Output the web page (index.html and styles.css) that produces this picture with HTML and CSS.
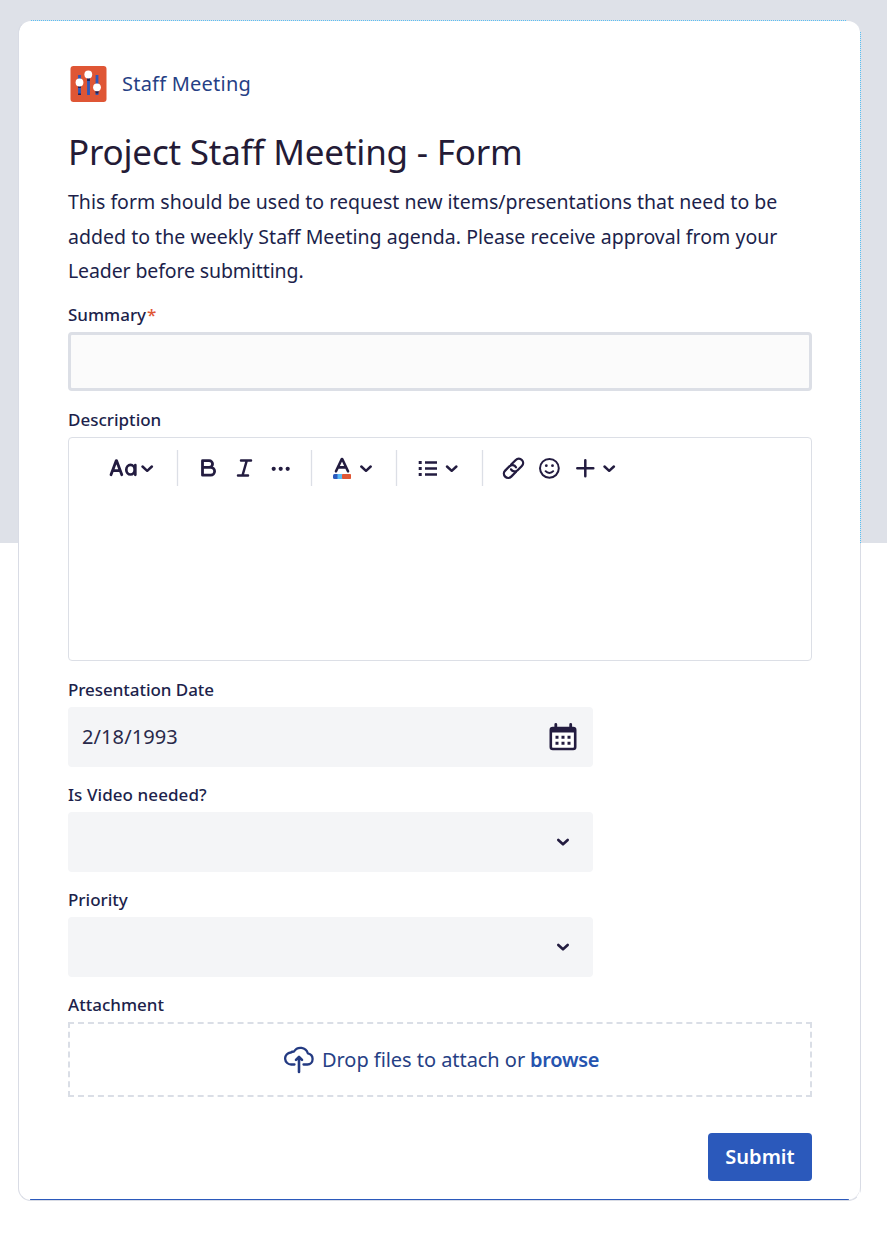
FILE: index.html
```html
<!DOCTYPE html>
<html lang="en">
<head>
<meta charset="utf-8">
<title>Project Staff Meeting - Form</title>
<link rel="stylesheet" href="styles.css">
</head>
<body>
<main class="card">
  <header class="project">
    <svg class="logo" viewBox="0 0 37 37" width="37" height="37">
      <rect x="0.5" y="0" width="36" height="36" rx="3" fill="#df5635"/>
      <path d="M9.500 9v20M18.500 7v22M27 9v20" stroke="#2b59bd" stroke-width="2.800"/>
      <path d="M9.500 20v2M9.500 27.500v1.500M18.500 12v3M27 25v2.500" stroke="#29204a" stroke-width="2.800"/>
      <g fill="#fff"><circle cx="9.500" cy="16.500" r="3.900"/><circle cx="18.300" cy="8.500" r="3.900"/><circle cx="27" cy="21.300" r="3.900"/></g>
    </svg>
    <span class="project-name">Staff Meeting</span>
  </header>
  <h1 class="title">Project Staff Meeting - Form</h1>
  <p class="intro"><span class="l1">This form should be used to request new items/presentations that need to be</span><br><span class="l2">added to the weekly Staff Meeting agenda. Please receive approval from your</span><br><span class="l3">Leader before submitting.</span></p>

  <label class="label summary-label">Summary<span class="required">*</span></label>
  <div class="input"></div>

  <label class="label description-label">Description</label>
  <div class="editor">
    <div class="toolbar">
      <svg width="560" height="38" viewBox="108 449 560 38" fill="none" stroke="#231c40" stroke-width="2.500" stroke-linecap="round" stroke-linejoin="round">
        <g stroke="#dcdfe6" stroke-width="1.300" stroke-linecap="butt"><path d="M177.500 450v36M311.500 450v36M396.500 450v36M482.500 450v36"/></g>
        <path d="M111 474.700l5.200-14h.4l5.200 14M112.800 470.700h7.200" stroke-width="2.800"/>
        <ellipse cx="130.500" cy="469.700" rx="4.200" ry="4.800" stroke-width="2.700"/><path d="M135.300 465v9.800" stroke-width="2.700"/>
        <path d="M142.500 466.500l4.700 4.300 4.700-4.300"/>
        <path d="M202.500 460.700h6.700a3.300 3.300 0 0 1 0 6.700h-6.700zM202.500 467.400h8.200a3.900 3.900 0 0 1 0 7.800h-8.200z" stroke-width="2.800"/>
        <path d="M241 460.500h10M238 475.500h10M246.800 460.500l-4.300 15" stroke-width="2.500"/>
        <g fill="#231c40" stroke="none"><circle cx="273.700" cy="468.800" r="2.100"/><circle cx="280.700" cy="468.800" r="2.100"/><circle cx="287.700" cy="468.800" r="2.100"/></g>
        <path d="M336 471.300l5.800-12.300h.4l5.800 12.300M338.200 467.400h7.600" stroke-width="2.600"/>
        <g stroke="none"><rect x="333" y="474" width="6" height="5" rx="1.500" fill="#2b59bd"/><rect x="337.500" y="474" width="5" height="5" fill="#57b9f5"/><rect x="342" y="474" width="9" height="5" rx=".8" fill="#df5635"/></g>
        <path d="M361.300 466.500l4.700 4.300 4.700-4.300"/>
        <g stroke-linecap="butt"><path d="M418.700 462.500h3M418.700 468.500h3M418.700 474.500h3" stroke-width="3"/><path d="M425 462.500h12M425 468.500h12M425 474.500h12" stroke-width="2.500"/></g>
        <path d="M447 466.500l4.700 4.300 4.700-4.300"/>
        <g transform="translate(513.500 468.300) rotate(-45)" stroke-width="2.300"><path d="M1-4.300H7.500a4.300 4.300 0 0 1 0 8.600H1.500a4.200 4.200 0 0 1-4-5.300"/><path d="M-1 4.300H-7.500a4.300 4.300 0 0 1 0-8.600H-1.500a4.200 4.200 0 0 1 4 5.300"/></g>
        <circle cx="549.400" cy="468.300" r="9.400" stroke-width="2"/>
        <g fill="#231c40" stroke="none"><circle cx="546.300" cy="465.700" r="1.400"/><circle cx="552.500" cy="465.700" r="1.400"/></g>
        <path d="M545.600 471.200c2 2.300 5.600 2.300 7.600 0" stroke-width="2"/>
        <path d="M577.300 468.300h16M585.300 460.300v16" stroke-width="2.500"/>
        <path d="M604.500 466.500l4.700 4.300 4.700-4.300"/>
      </svg>
    </div>
  </div>

  <label class="label date-label">Presentation Date</label>
  <div class="field">
    <span class="date">2/18/1993</span>
    <svg class="calendar" width="28" height="28" viewBox="0 0 28 28">
      <path d="M6.800 1.500v4M21.700 1.500v4" stroke="#231c40" stroke-width="2.800" stroke-linecap="round"/>
      <rect x="1.800" y="5" width="24.400" height="21" rx="2" fill="#fff" stroke="#231c40" stroke-width="2.600"/>
      <path d="M1.500 5h25v4.500h-25z" fill="#231c40"/>
      <path d="M6.500 14.200h3M12.500 14.200h3M18.500 14.200h3M6.500 20.200h3M12.500 20.200h3M18.500 20.200h3" stroke="#231c40" stroke-width="3"/>
    </svg>
  </div>

  <label class="label video-label">Is Video needed?</label>
  <div class="field"><svg class="chevron" width="28" height="14" viewBox="0 0 28 14"><path d="M9.300 5l4.700 4.300L18.700 5" fill="none" stroke="#231c40" stroke-width="2.600" stroke-linecap="round" stroke-linejoin="round"/></svg></div>

  <label class="label priority-label">Priority</label>
  <div class="field"><svg class="chevron" width="28" height="14" viewBox="0 0 28 14"><path d="M9.300 5l4.700 4.300L18.700 5" fill="none" stroke="#231c40" stroke-width="2.600" stroke-linecap="round" stroke-linejoin="round"/></svg></div>

  <label class="label attachment-label">Attachment</label>
  <div class="dropzone">
    <svg class="cloud" width="31" height="28" viewBox="0 0 31 28" fill="none" stroke="#233a82" stroke-width="2.300" stroke-linecap="round" stroke-linejoin="round">
      <path d="M10.500 18.500H7.500a6 6 0 0 1-.7-12C8 5.500 9 5.500 10 5.500A7.600 7.600 0 0 1 23.800 7.300C27 8 28.600 10 28.600 13c0 3-2.200 5.500-5.200 5.500H19.500"/>
      <path d="M15 26V11.500M12 13.800l3-3 3 3" stroke-width="2.600"/>
    </svg>
    <span class="drop-text">Drop files to attach or</span><a class="browse">browse</a>
  </div>

  <div class="actions"><button class="submit">Submit</button></div>
</main>
</body>
</html>
```
FILE: styles.css
```css
* { box-sizing: border-box; }
body {
  margin: 0;
  padding: 20px 26px 34px 18px;
  min-height: 1235px;
  background: linear-gradient(#dee1e8 0 543px, #fff 543px);
  font-family: "Noto Sans", "Open Sans", sans-serif;
  color: #201f4b;
}
.card {
  width: 843px;
  height: 1181px;
  padding: 45px 48px 0 49px;
  border: 1px solid #d9dce5;
  border-radius: 13px;
  background:
    linear-gradient(#2b59bb, #2b59bb) center bottom / 819px 1px no-repeat padding-box,
    repeating-linear-gradient(90deg, #57c0f5 0 1px, #dcdfe6 1px 2px) 13px 0 / 816px 1px no-repeat border-box,
    repeating-linear-gradient(#57c0f5 0 1px, #dcdfe6 1px 2px) 100% 12px / 1px 508px no-repeat border-box,
    #fff;
  border-top-color: transparent;
  border-right-color: #d9dce500;
  box-shadow: inset -1px -1px 0 -1px #d9dce5;
  background-clip: padding-box, border-box, border-box, padding-box;
  outline: 0;
}
.card { border-right-color: transparent; border-image: none; }
.card {
  background:
    linear-gradient(#2b59bb, #2b59bb) center bottom / 819px 1px no-repeat padding-box,
    repeating-linear-gradient(90deg, #57c0f5 0 1px, #dcdfe6 1px 2px) 13px 0 / 816px 1px no-repeat border-box,
    repeating-linear-gradient(#57c0f5 0 1px, #dcdfe6 1px 2px) 100% 12px / 1px 511px no-repeat border-box,
    linear-gradient(#d9dce5, #d9dce5) 100% 100% / 1px 658px no-repeat border-box,
    linear-gradient(#fff, #fff) padding-box;
}
.project { display: flex; align-items: center; height: 37px; margin-left: 2px; gap: 15px; }
.logo { display: block; }
.project-name { margin-top: -2px; font-size: 20px; letter-spacing: 0.22px; color: #263f85; white-space: nowrap; }
.title { margin: 21px 0 0; height: 56px; font-size: 35px; letter-spacing: -0.2px; line-height: 56px; font-weight: 400; color: #241b36; white-space: nowrap; }
.intro { margin: 5px 0 0; height: 104px; font-size: 19.5px; line-height: 34.5px; white-space: nowrap; }
.l1 { letter-spacing: 0.01px; }
.l2 { letter-spacing: 0.025px; }
.l3 { letter-spacing: -0.12px; }
.label { display: block; height: 24px; line-height: 24px; font-size: 17px; font-weight: 500; white-space: nowrap; }
.required { color: #df5635; margin-left: 1px; }
.summary-label { margin-top: 14px; }
.input { margin-top: 5px; height: 59px; border: 3px solid #dcdfe6; border-radius: 4px; background: #fbfbfb; }
.description-label { margin-top: 17px; }
.editor { margin-top: 5px; height: 224px; border: 1.5px solid #dcdfe6; border-radius: 4px; }
.toolbar { padding: 11px 0 0 39px; }
.toolbar svg { display: block; }
.date-label { margin-top: 17px; letter-spacing: -0.05px; }
.field { display: flex; align-items: center; width: 525px; height: 60px; margin-top: 5px; padding: 0 16px 0 14px; border-radius: 4px; background: #f4f5f7; }
.date { margin-top: -2px; font-size: 20px; letter-spacing: 0.1px; color: #29294a; }
.calendar, .chevron { margin-left: auto; }
.video-label, .priority-label, .attachment-label { margin-top: 16px; }
.video-label { letter-spacing: 0.08px; }
.dropzone { display: flex; align-items: center; height: 75px; margin-top: 5px; padding-left: 214px; border: 2px dashed #dadee6; font-size: 20px; white-space: nowrap; color: #263f85; }
.drop-text { margin-left: 7px; letter-spacing: -0.05px; }
.browse { margin-left: 5px; font-weight: 600; letter-spacing: -0.3px; color: #2654af; }
.actions { display: flex; justify-content: flex-end; margin-top: 36px; }
.submit { width: 104px; height: 48px; padding: 0 0 2px; border: 0; border-radius: 4px; background: #2b59bb; color: #fff; font: 600 20px "Noto Sans", sans-serif; }
```
